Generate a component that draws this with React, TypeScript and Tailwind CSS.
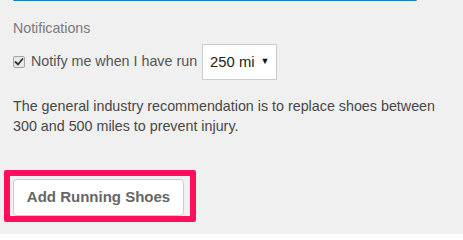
export default function App() {
  return (
    <div className="relative h-[234px] w-[463px] overflow-hidden bg-[#f0f0f0] font-['Liberation_Sans',Arial,sans-serif] text-[14px]">
      {/* bottom edge of the input above */}
      <div className="ml-[13px] h-[2px] w-[404px] -mt-px rounded-b-[2px] border-x-2 border-b-2 border-[#1a7fb8]" />

      <div className="px-[13px]">
        <div className="mt-[19px] text-[14.2px] leading-[17px] text-[#7a7a7a]">Notifications</div>

        <div className="mt-[7px] flex items-center">
          {/* checkbox */}
          <span className="flex h-[12px] w-[12px] items-center justify-center rounded-[2px] border border-[#a5a5a5] bg-[#e9e9e9]">
            <svg viewBox="0 0 12 12" className="h-[10px] w-[10px]">
              <path d="M2 6.2 L4.8 9 L10 2.6" fill="none" stroke="#333" strokeWidth="2.2" strokeLinecap="square" />
            </svg>
          </span>
          <span className="ml-[6px] text-[14.3px] text-[#555]">Notify me when I have run</span>
          {/* select */}
          <div className="ml-[5px] flex h-[36px] w-[75px] items-center border border-[#cccccc] bg-white pl-[7px] text-[14.8px] text-[#222]">
            <span>250 mi</span>
            <span className="ml-[6px] text-[9px] text-[#111]">▼</span>
          </div>
        </div>

        <p className="mt-[16px] text-[14.3px] leading-[20px] text-[#474747]">
          The general industry recommendation is to replace shoes between
          <br />
          300 and 500 miles to prevent injury.
        </p>

        <button
          type="button"
          className="mt-[43px] flex h-[37px] w-[171px] items-center justify-center rounded-[4px] border border-[#cccccc] bg-white text-[15px] font-bold text-[#666]"
        >
          Add Running Shoes
        </button>
      </div>

      {/* highlight annotation */}
      <div className="pointer-events-none absolute left-[4px] top-[170px] h-[52px] w-[192px] rounded-[2px] border-[6px] border-[#ff0f5c]" />
    </div>
  );
}
